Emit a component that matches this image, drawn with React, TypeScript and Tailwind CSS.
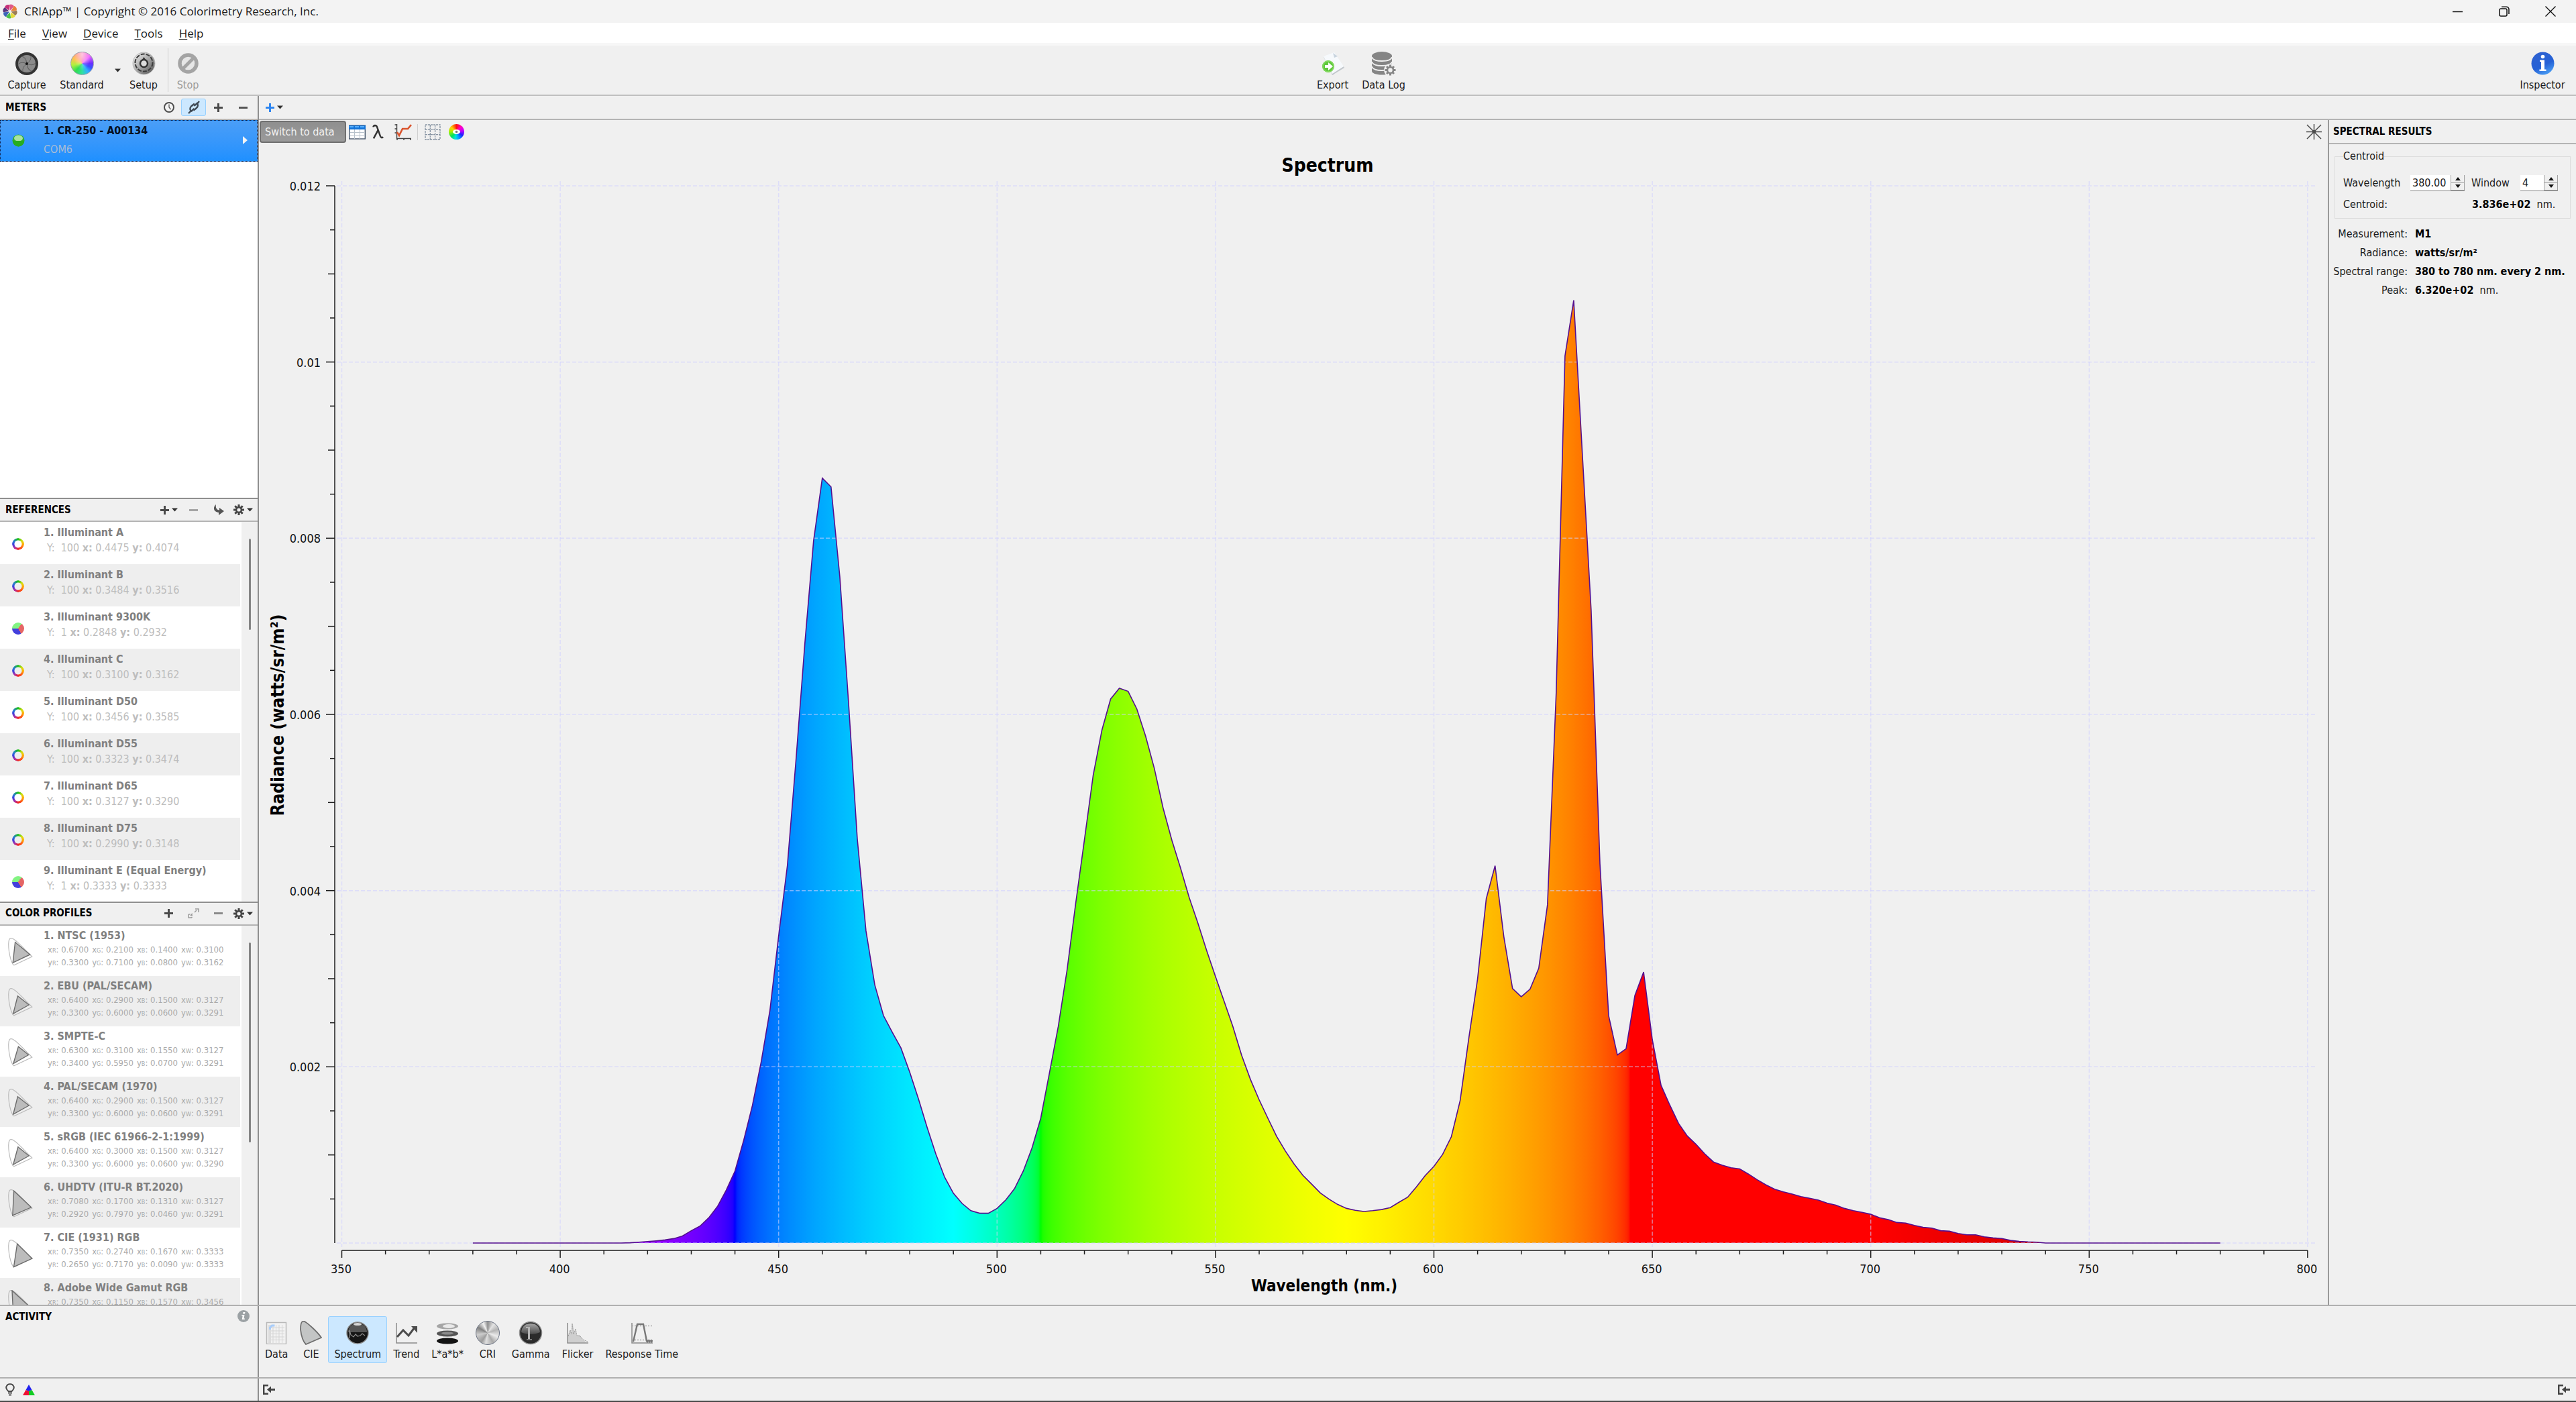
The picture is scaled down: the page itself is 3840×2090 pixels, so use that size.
import { useState } from 'react';
import type { ReactNode } from 'react';

// Spectral radiance, 2 nm steps starting at 380 nm, in 1e-6 watts/sr/m²
const FIRST_NM = 380;
const STEP_NM = 2;
const SAMPLES = [
  0, 0, 0, 0, 0, 0, 0, 0, 0, 0, 0, 0, 0, 0, 0, 0, 0, 0, 3, 10,
  17, 25, 35, 50, 80, 140, 192, 286, 414, 600,
  816, 1165, 1562, 2057, 2640, 3485, 4283, 5495, 6806, 7971,
  8682, 8583, 7563, 6136, 4592, 3543, 2931, 2581, 2395, 2214,
  1940, 1637, 1311, 1008, 746, 565, 449, 367, 338, 338,
  393, 489, 616, 817, 1079, 1416, 1932, 2456, 3090, 3854,
  4575, 5310, 5821, 6175, 6297, 6262, 6061, 5755, 5388, 4938,
  4575, 4256, 3920, 3627, 3317, 3024, 2740, 2456, 2128, 1857,
  1626, 1416, 1210, 1044, 896, 769, 669, 568, 498, 437,
  393, 371, 358, 367, 380, 402, 463, 520, 638, 765,
  870, 1006, 1207, 1617, 2329, 2997, 3910, 4283, 3479, 2889,
  2796, 2882, 3119, 3838, 6246, 10069, 10701, 8941, 7180, 4305,
  2580, 2135, 2206, 2810, 3076, 2307, 1790, 1567, 1358, 1215,
  1121, 1013, 920, 884, 855, 841, 783, 719, 661, 611,
  581, 556, 528, 508, 487, 452, 431, 393, 368, 348,
  327, 287, 266, 233, 226, 200, 178, 170, 140, 134,
  109, 94, 94, 71, 58, 51, 30, 18, 13, 10,
  0, 0, 0, 0, 0, 0, 0, 0, 0, 0,
  0, 0, 0, 0, 0, 0, 0, 0, 0, 0, 0,
];

const references = [
  { name: 'Illuminant A', Y: '100', x: '0.4475', y: '0.4074' },
  { name: 'Illuminant B', Y: '100', x: '0.3484', y: '0.3516' },
  { name: 'Illuminant 9300K', Y: '1', x: '0.2848', y: '0.2932', pie: true },
  { name: 'Illuminant C', Y: '100', x: '0.3100', y: '0.3162' },
  { name: 'Illuminant D50', Y: '100', x: '0.3456', y: '0.3585' },
  { name: 'Illuminant D55', Y: '100', x: '0.3323', y: '0.3474' },
  { name: 'Illuminant D65', Y: '100', x: '0.3127', y: '0.3290' },
  { name: 'Illuminant D75', Y: '100', x: '0.2990', y: '0.3148' },
  { name: 'Illuminant E (Equal Energy)', Y: '1', x: '0.3333', y: '0.3333', pie: true },
];

const profiles = [
  { name: 'NTSC (1953)', x: ['0.6700', '0.2100', '0.1400', '0.3100'], y: ['0.3300', '0.7100', '0.0800', '0.3162'] },
  { name: 'EBU (PAL/SECAM)', x: ['0.6400', '0.2900', '0.1500', '0.3127'], y: ['0.3300', '0.6000', '0.0600', '0.3291'] },
  { name: 'SMPTE-C', x: ['0.6300', '0.3100', '0.1550', '0.3127'], y: ['0.3400', '0.5950', '0.0700', '0.3291'] },
  { name: 'PAL/SECAM (1970)', x: ['0.6400', '0.2900', '0.1500', '0.3127'], y: ['0.3300', '0.6000', '0.0600', '0.3291'] },
  { name: 'sRGB (IEC 61966-2-1:1999)', x: ['0.6400', '0.3000', '0.1500', '0.3127'], y: ['0.3300', '0.6000', '0.0600', '0.3290'] },
  { name: 'UHDTV (ITU-R BT.2020)', x: ['0.7080', '0.1700', '0.1310', '0.3127'], y: ['0.2920', '0.7970', '0.0460', '0.3291'] },
  { name: 'CIE (1931) RGB', x: ['0.7350', '0.2740', '0.1670', '0.3333'], y: ['0.2650', '0.7170', '0.0090', '0.3333'] },
  { name: 'Adobe Wide Gamut RGB', x: ['0.7350', '0.1150', '0.1570', '0.3456'], y: ['0.2650', '0.8260', '0.0180', '0.3585'] },
];

const PRIMARIES = ['R', 'G', 'B', 'W'];

const LOCUS = [
  [0.1741, 0.005], [0.144, 0.0297], [0.1241, 0.0578], [0.0913, 0.1327], [0.0687, 0.2007], [0.0454, 0.295],
  [0.0235, 0.4127], [0.0082, 0.5384], [0.0039, 0.6548], [0.0139, 0.7502], [0.0389, 0.812], [0.0743, 0.8338],
  [0.1142, 0.8262], [0.1547, 0.8059], [0.2296, 0.7543], [0.3016, 0.6923], [0.3731, 0.6245], [0.4441, 0.5547],
  [0.5125, 0.4866], [0.5752, 0.4242], [0.627, 0.3725], [0.6915, 0.3083], [0.7347, 0.2653],
];

const toPoints = (xy: number[][]) => xy.map(([x, y]) => `${(0.5 + x * 48).toFixed(1)},${(41 - y * 48.6).toFixed(1)}`).join(' ');

// Approximate sRGB colour of a single wavelength
const wavelengthColor = (nm: number) => {
  let r = 0, g = 0, b = 0;
  if (nm < 440) { r = (440 - nm) / 60; b = 1; }
  else if (nm < 490) { g = (nm - 440) / 50; b = 1; }
  else if (nm < 510) { g = 1; b = (510 - nm) / 20; }
  else if (nm < 580) { r = (nm - 510) / 70; g = 1; }
  else if (nm < 645) { r = 1; g = (645 - nm) / 65; }
  else { r = 1; }
  const f = nm > 700 ? 0.3 + (0.7 * (780 - nm)) / 80 : nm < 420 ? 0.3 + (0.7 * (nm - 380)) / 40 : 1;
  const c = (v: number) => Math.round(255 * Math.pow(v * f, 0.44));
  return `rgb(${c(r)},${c(g)},${c(b)})`;
};

/* ---------- small icons ---------- */

const Caret = () => (
  <svg width="9" height="6" viewBox="0 0 9 6" aria-hidden="true"><path d="M0 0.5h9L4.5 5.5z" fill="#333" /></svg>
);

const Plus = ({ color = '#4a4a4a' }: { color?: string }) => (
  <svg width="13" height="13" viewBox="0 0 13 13" aria-hidden="true"><path d="M5 0h3v5h5v3H8v5H5V8H0V5h5z" fill={color} /></svg>
);

const Minus = ({ color = '#555' }: { color?: string }) => (
  <svg width="13" height="13" viewBox="0 0 13 13" aria-hidden="true"><path d="M0 5h13v3H0z" fill={color} /></svg>
);

const Gear = () => (
  <svg width="16" height="16" viewBox="0 0 16 16" aria-hidden="true">
    <g stroke="#444" strokeWidth="3">
      <path d="M8 0v16M0 8h16M2.3 2.3l11.4 11.4M13.7 2.3L2.3 13.7" />
    </g>
    <circle cx="8" cy="8" r="5" fill="#444" />
    <circle cx="8" cy="8" r="2.6" fill="#f0f0f0" />
  </svg>
);

const Clock = () => (
  <svg width="18" height="18" viewBox="0 0 18 18" aria-hidden="true">
    <circle cx="9" cy="9" r="7" fill="#f4f4f4" stroke="#4f4f4f" strokeWidth="2" />
    <path d="M9 4.5V9l2.6 3" fill="none" stroke="#4f4f4f" strokeWidth="1.2" />
  </svg>
);

const Link = () => (
  <svg width="20" height="20" viewBox="0 0 20 20" fill="none" stroke="#3f4a55" strokeWidth="2.4" aria-hidden="true">
    <path d="M2 19l4-4" />
    <path d="M14.5 5L18 1" />
    <path d="M11 4.5L6 8.5c-2.500 2.500-2 6 .5 7l4-3.500" />
    <path d="M9.500 14.500l4.500-3.500c2.500-2.500 2.500-5.500.5-7L10.500 8" />
  </svg>
);

const TurnArrow = () => (
  <svg width="16" height="18" viewBox="0 0 16 18" aria-hidden="true">
    <path d="M4 1C-1 5 0 12 8 13v4l8-6-7-5v3.500C5 9 3 6 4 1z" fill="#555" />
  </svg>
);

const Expand = () => (
  <svg width="17" height="15" viewBox="0 0 17 15" fill="none" stroke="#9a9a9a" strokeWidth="1.500" aria-hidden="true">
    <path d="M11 1h5v5M1 9v5h5M10 6l3-3M4 11l3-3" />
    <path d="M1 9h5v5" strokeDasharray="2 1" />
  </svg>
);

const InfoGrey = () => (
  <svg width="18" height="18" viewBox="0 0 18 18" aria-hidden="true">
    <circle cx="9" cy="9" r="9" fill="#9ba1a4" />
    <path d="M8.500 3h3l-.5 2.500H8zM6.500 7h4l-1 5.500h1.500l-.3 1.500h-4l1-5.500H6.200z" fill="#fff" />
  </svg>
);

const Dock = () => (
  <svg width="19" height="15" viewBox="0 0 19 15" aria-hidden="true">
    <path d="M8 1.200H1.200v12.600H8" fill="none" stroke="#444" strokeWidth="2.400" />
    <path d="M6 7.500l6-5v3.500h6v3h-6v3.500z" fill="#444" />
  </svg>
);

const GamutIcon = ({ x, y }: { x: string[]; y: string[] }) => (
  <svg width="37" height="42" viewBox="0 0 37 42" aria-hidden="true">
    <polygon points={toPoints(LOCUS)} fill="none" stroke="#bdbdbd" strokeWidth="1.200" />
    <polygon points={toPoints([0, 1, 2].map(i => [Number(x[i]), Number(y[i])]))} fill="#bcbcbc" stroke="#6c6c6c" strokeWidth="1.400" />
  </svg>
);

const AppLogo = () => {
  const petals = ['#e05a86', '#e8823a', '#9a7b55', '#e3d93c', '#4fc04c', '#3f63b8', '#57357f', '#c42f78'];
  return (
    <svg width="22" height="22" viewBox="-11 -11 22 22" aria-hidden="true">
      {petals.map((c, i) => (
        <path key={c} d="M0 -1.500L-3 -9.500C-1 -11.500 3 -11 4.500 -8.500Z" fill={c} transform={`rotate(${i * 45 + 10})`} />
      ))}
      <circle r="1.500" fill="#f3f3f3" />
    </svg>
  );
};

/* ---------- toolbar icons, all on a 34px grid ---------- */

const CaptureIcon = () => (
  <svg width="34" height="34" viewBox="-17 -17 34 34" aria-hidden="true">
    <circle r="15" fill="#8b8b8b" stroke="#333" strokeWidth="4" />
    {[0, 60, 120, 180, 240, 300].map(a => (
      <path key={a} d="M1 -1Q7 -5 6 -12" fill="none" stroke="#5f5f5f" strokeWidth="1" transform={`rotate(${a})`} />
    ))}
    <circle r="2" fill="#111" />
  </svg>
);

const StandardIcon = () => (
  <span className="size-[35px] rounded-full border border-gray-400 bg-[radial-gradient(ellipse_at_50%_10%,rgba(255,255,255,0.6),transparent_55%),conic-gradient(#ff70b0,#f060ff_45deg,#6a30ff_90deg,#3a50ff_115deg,#30b0ff_145deg,#30e0a0_180deg,#30dd50_220deg,#b0f040_260deg,#ffc050_300deg,#ff70b0)]" />
);

const SetupIcon = () => (
  <svg width="35" height="35" viewBox="0 0 35 35" aria-hidden="true">
    <defs>
      <linearGradient id="dial" x1="0" y1="0" x2="1" y2="1">
        <stop offset="0" stopColor="#f5f5f5" />
        <stop offset="0.5" stopColor="#a8a8a8" />
        <stop offset="1" stopColor="#4a4a4a" />
      </linearGradient>
    </defs>
    <circle cx="17.500" cy="17.500" r="16.500" fill="url(#dial)" stroke="#bbb" strokeWidth="1" />
    <circle cx="17.500" cy="16.500" r="13" fill="none" stroke="#3d3d3d" strokeWidth="2" strokeDasharray="6 2" />
    <path d="M17.500 8l3 4.500h-6z" fill="#333" />
    <circle cx="17.500" cy="17.500" r="5.500" fill="#ddd" stroke="#333" strokeWidth="2.500" />
  </svg>
);

const StopIcon = () => (
  <svg width="31" height="31" viewBox="0 0 31 31" aria-hidden="true">
    <circle cx="15.500" cy="15.500" r="12.500" fill="#e6e6e6" stroke="#a4a4a4" strokeWidth="5.500" />
    <path d="M24 7L7 24" stroke="#a4a4a4" strokeWidth="5" />
  </svg>
);

const ExportIcon = () => (
  <svg width="34" height="34" viewBox="0 0 34 34" aria-hidden="true">
    <path d="M3 7L5 5l14 28-3 1z" fill="#d3d8dd" />
    <path d="M16 34l18-11-1-2-18 10z" fill="#c2c7cc" />
    <path d="M3 6L19 0l14 21-17 11z" fill="#f6f9fc" />
    <path d="M17 1l7 5-5 2z" fill="#c9d4de" />
    <circle cx="10" cy="21" r="9" fill="#5fc83c" />
    <circle cx="10" cy="21" r="8" fill="none" stroke="#86da62" strokeWidth="1.500" />
    <path d="M5 19h5v-4l7 6-7 6v-4H5z" fill="#fff" />
  </svg>
);

const DataLogIcon = () => (
  <svg width="36" height="36" viewBox="0 0 36 36" aria-hidden="true">
    <g fill="#858585">
      <path d="M0 6v23c0 3 6 5.500 15 5.500s15-2.500 15-5.500V6z" />
      <ellipse cx="15" cy="6.500" rx="15" ry="6.500" />
    </g>
    <g fill="none" stroke="#f0f0f0" strokeWidth="1.800">
      <path d="M0 8c1 4 6 6 15 6s14-2 15-6M0 15c1 4 6 6 15 6s14-2 15-6M0 22c1 4 6 6 15 6s14-2 15-6" />
    </g>
    <circle cx="27.500" cy="27.500" r="9.500" fill="#f0f0f0" />
    <path d="M27.500 19.500v16M19.500 27.500h16M22 22l11 11M33 22L22 33" stroke="#858585" strokeWidth="3" />
    <circle cx="27.500" cy="27.500" r="4.500" fill="#f0f0f0" stroke="#858585" strokeWidth="2.600" />
  </svg>
);

const InspectorIcon = () => (
  <svg width="35" height="35" viewBox="0 0 35 35" aria-hidden="true">
    <defs>
      <linearGradient id="blue" x1="0.200" y1="0" x2="0.700" y2="1">
        <stop offset="0" stopColor="#2f62d0" />
        <stop offset="0.600" stopColor="#2561d6" />
        <stop offset="1" stopColor="#4ba0f5" />
      </linearGradient>
    </defs>
    <circle cx="17.500" cy="17.500" r="17" fill="url(#blue)" />
    <circle cx="17.500" cy="7.500" r="2.800" fill="#fff" />
    <path d="M13 12.500h7v14h2.500v2.500H12.500v-2.500H15v-11.500h-2z" fill="#fff" />
  </svg>
);

/* ---------- view icons ---------- */

const DataIcon = () => (
  <svg width="32" height="34" viewBox="0 0 32 34" aria-hidden="true">
    <rect x="1.500" y="1.500" width="29" height="32" fill="#f2f2f2" stroke="#b9b9b9" strokeWidth="1.500" />
    <rect x="4" y="5" width="4" height="27" fill="#dcdcdc" />
    <path d="M11 5v27M15.500 5v27M20 5v27M24.500 5v27M8 9.500h20M8 14h20M8 18.500h20M8 23h20M8 27.500h20" stroke="#d3d3d3" strokeWidth="1" />
    <path d="M6.500 12V9l3-3h4" fill="none" stroke="#a9cdfa" strokeWidth="3" />
  </svg>
);

const CieIcon = () => (
  <svg width="33" height="36" viewBox="0 0 33 36" aria-hidden="true">
    <path d="M4 1C1 2 1 8 1 13c1 9 4 18 8 22l23-10C25 15 11 3 7 1c-1-.5-2-.5-3 0z" fill="#c3c5c5" stroke="#6f6f6f" strokeWidth="1.800" />
  </svg>
);

const SpectrumIcon = () => (
  <svg width="34" height="34" viewBox="0 0 34 34" aria-hidden="true">
    <circle cx="17" cy="17" r="16" fill="#161616" stroke="#8e8e8e" strokeWidth="1.500" />
    <path d="M3 16C3 8 9 2.500 17 2.500S31 8 31 16z" fill="#555" />
    <ellipse cx="17" cy="4" rx="6" ry="2" fill="#d8d8d8" />
    <path d="M5 25V13l2 7 4 3 3-4 3 3 4-1 3-3 4 3" fill="none" stroke="#8d8d8d" strokeWidth="1.200" />
  </svg>
);

const TrendIcon = () => (
  <svg width="34" height="34" viewBox="0 0 34 34" aria-hidden="true">
    <path d="M2 2v30h31" fill="none" stroke="#8a8a8a" strokeWidth="1.500" />
    <path d="M3 23l9-10 8 8 9-12" fill="none" stroke="#4c4c4c" strokeWidth="3" />
    <path d="M24 7h9v10z" fill="#4c4c4c" />
  </svg>
);

const LabIcon = () => (
  <svg width="34" height="34" viewBox="0 0 34 34" aria-hidden="true">
    <ellipse cx="17" cy="7" rx="16" ry="4.500" fill="#a5a5a5" />
    <ellipse cx="19" cy="7" rx="9" ry="3" fill="#e9e9e9" />
    <ellipse cx="17" cy="18" rx="16" ry="4.500" fill="#555" />
    <ellipse cx="17" cy="17.500" rx="9" ry="2" fill="#8b8b8b" />
    <ellipse cx="17" cy="29" rx="16" ry="4.500" fill="#131313" />
  </svg>
);

const CriIcon = () => (
  <span className="size-[36px] rounded-full border border-gray-500 bg-[conic-gradient(#8e8e8e,#e4e4e4_35deg,#b4b4b4_70deg,#ececec_110deg,#a9a9a9_150deg,#e0e0e0_190deg,#9c9c9c_215deg,#cdcdcd_260deg,#808080_300deg,#f2f2f2_335deg,#8e8e8e)]" />
);

const GammaIcon = () => (
  <svg width="36" height="36" viewBox="0 0 36 36" aria-hidden="true">
    <defs>
      <linearGradient id="gloss" x1="0" y1="0" x2="0" y2="1">
        <stop offset="0" stopColor="#a5a5a5" />
        <stop offset="1" stopColor="#4a4a4a" />
      </linearGradient>
    </defs>
    <circle cx="18" cy="18" r="16.500" fill="#2b2b2b" stroke="#8f8f8f" strokeWidth="1.500" />
    <path d="M4 17C5 8 10 4 18 4s13 4 14 13c-8 4-20 4-28 0z" fill="url(#gloss)" />
    <path d="M11 9h6v19h-3V11h-3z" fill="#b5b5b5" />
    <path d="M12 28h8" stroke="#777" strokeWidth="2" />
  </svg>
);

const FlickerIcon = () => (
  <svg width="34" height="34" viewBox="0 0 34 34" aria-hidden="true">
    <path d="M3 31V20l3-8 2 6 2-15 1 14 3-6 2 10 4-1 4 6 6 5z" fill="#cfcfcf" />
    <path d="M3 22l3-9 2 6 1-16 2 16 3-8 2 10 5 1 4 5 7 3" fill="none" stroke="#9a9a9a" strokeWidth="1" strokeDasharray="2 1" />
    <path d="M2 2v30h31" fill="none" stroke="#8a8a8a" strokeWidth="1.500" />
  </svg>
);

const ResponseIcon = () => (
  <svg width="34" height="34" viewBox="0 0 34 34" aria-hidden="true">
    <path d="M2 2v30h31" fill="none" stroke="#8a8a8a" strokeWidth="1.500" />
    <path d="M2 6.500h31M2 27.500h31" stroke="#aaa" strokeWidth="1.500" strokeDasharray="2 2" />
    <path d="M4 30l6-26h9l5 25h9" fill="none" stroke="#777" strokeWidth="2.400" />
    <path d="M24 29.500h9" stroke="#777" strokeWidth="4" strokeDasharray="2 1" />
  </svg>
);

/* ---------- layout pieces ---------- */

const ToolButton = ({ label, icon, className = '', disabled }: { label: string; icon: ReactNode; className?: string; disabled?: boolean }) => (
  <button type="button" disabled={disabled} className={`flex flex-col items-center pt-2 ${disabled ? 'text-[#9a9a9a]' : ''} ${className}`}>
    <span className="flex h-[37px] items-center">{icon}</span>
    <span className="mt-1 leading-5 whitespace-nowrap">{label}</span>
  </button>
);

const HeaderButton = ({ label, children, active }: { label: string; children: ReactNode; active?: boolean }) => (
  <button
    type="button"
    aria-label={label}
    className={`flex h-[26px] w-[37px] items-center justify-center gap-1 ${active ? 'rounded-[3px] border border-[#99d1ff] bg-[#cce8ff]' : ''}`}
  >
    {children}
  </button>
);

const Panel = ({ title, actions, children, first }: { title: string; actions: ReactNode; children: ReactNode; first?: boolean }) => (
  <section className={`flex min-h-0 flex-1 flex-col ${first ? '' : 'border-t-2 border-[#8f8f8f]'}`}>
    <header className={`flex shrink-0 items-center justify-between border-b-2 border-[#b4b4b4] pr-[3px] pl-2 ${first ? 'h-9' : 'h-[34px]'}`}>
      <h2 className="text-[15px] font-bold text-black">{title}</h2>
      <div className="flex items-center">{actions}</div>
    </header>
    {children}
  </section>
);

const ScrollList = ({ thumb, children }: { thumb: string; children: ReactNode }) => (
  <div className="flex min-h-0 flex-1 bg-white">
    <ul className="min-w-0 flex-1 overflow-hidden">{children}</ul>
    <div className="w-6 bg-[#f0f0f0] pt-[25px]">
      <div className={`mx-auto w-[3px] rounded bg-[#858585] ${thumb}`} />
    </div>
  </div>
);

const Spinner = ({ id, value, width, onStep }: { id: string; value: string; width: string; onStep: (d: number) => void }) => (
  <span className="flex h-6 border-b border-[#868686]">
    <input id={id} value={value} readOnly className={`h-full bg-white pl-[3px] outline-none ${width}`} />
    <span className="flex w-[21px] flex-col border-r border-[#a0a0a0]">
      <button type="button" aria-label={`Increase ${id}`} onClick={() => onStep(1)} className="flex flex-1 items-center justify-center border-b border-l border-[#a0a0a0]">
        <svg width="8" height="5" viewBox="0 0 8 5" aria-hidden="true"><path d="M0 5h8L4 0z" fill="#111" /></svg>
      </button>
      <button type="button" aria-label={`Decrease ${id}`} onClick={() => onStep(-1)} className="flex flex-1 items-center justify-center border-b border-l border-[#a0a0a0]">
        <svg width="8" height="5" viewBox="0 0 8 5" aria-hidden="true"><path d="M0 0h8L4 5z" fill="#111" /></svg>
      </button>
    </span>
  </span>
);

// Plot geometry inside the 3084 x 1731 view box
const X0 = 123.5;
const PX_PER_NM = 6.512;
const Y0 = 1639;
const PX_PER_UNIT = 1576 / 12000;
const px = (nm: number) => X0 + (nm - 350) * PX_PER_NM;
const py = (v: number) => Y0 - v * PX_PER_UNIT;

const SpectrumPlot = () => {
  const pts = SAMPLES.map((v, i) => `${px(FIRST_NM + i * STEP_NM).toFixed(1)},${py(v).toFixed(1)}`);
  const majorsX = Array.from({ length: 10 }, (_, i) => 350 + i * 50);
  const minorsX = Array.from({ length: 46 }, (_, i) => 350 + i * 10);
  const majorsY = Array.from({ length: 7 }, (_, i) => i * 2000);
  const minorsY = Array.from({ length: 25 }, (_, i) => i * 500);
  // half-nanometre stops keep the hue edges at 440, 510 and 645 nm crisp
  const stops = Array.from({ length: 801 }, (_, i) => i / 800);

  return (
    <svg viewBox="0 0 3084 1731" preserveAspectRatio="none" className="block h-full w-full" role="img" aria-label="Spectrum">
      <defs>
        <linearGradient id="spectrum" gradientUnits="userSpaceOnUse" x1={px(380)} y1="0" x2={px(780)} y2="0">
          {stops.map(t => (
            <stop key={t} offset={t} stopColor={wavelengthColor(380 + t * 400)} />
          ))}
        </linearGradient>
      </defs>

      <polygon points={`${px(380)},${Y0} ${pts.join(' ')} ${px(780)},${Y0}`} fill="url(#spectrum)" />

      <g stroke="#d0d0ff" strokeOpacity="0.6" strokeWidth="1.500" strokeDasharray="6 3">
        {majorsX.map(nm => <line key={nm} x1={px(nm)} x2={px(nm)} y1="56" y2="1645" />)}
        {majorsY.map(v => <line key={v} x1="116" x2="3066" y1={py(v)} y2={py(v)} />)}
      </g>

      <polyline points={pts.join(' ')} fill="none" stroke="#55108f" strokeWidth="1.600" />

      <g stroke="#1c1c1c" strokeWidth="1.500">
        <line x1="113" x2="113" y1={py(12000)} y2={Y0} />
        {minorsY.filter(v => v > 0).map(v => (
          <line key={v} x1={v % 2000 === 0 ? 100 : v % 1000 === 0 ? 103 : 106} x2="113" y1={py(v)} y2={py(v)} />
        ))}
        <line x1={px(350)} x2={px(800)} y1="1650" y2="1650" />
        {minorsX.map(nm => (
          <line key={nm} x1={px(nm)} x2={px(nm)} y1="1650" y2={nm % 50 === 0 ? 1661 : 1656} />
        ))}
      </g>

      <g fontSize="18" fill="#111">
        {majorsY.filter(v => v > 0).map(v => (
          <text key={v} x="92" y={py(v) + 7} textAnchor="end">{v / 1000000}</text>
        ))}
        {majorsX.map(nm => <text key={nm} x={px(nm) - 1} y="1684" textAnchor="middle">{nm}</text>)}
      </g>

      <g fontWeight="700" fill="#000" textAnchor="middle">
        <text x="1593" y="42" fontSize="28">Spectrum</text>
        <text x="1588" y="1711" fontSize="24">Wavelength (nm.)</text>
        <text transform="translate(37 852) rotate(-90)" fontSize="26">Radiance (watts/sr/m²)</text>
      </g>
    </svg>
  );
};

const views = [
  { label: 'Data', icon: <DataIcon /> },
  { label: 'CIE', icon: <CieIcon /> },
  { label: 'Spectrum', icon: <SpectrumIcon /> },
  { label: 'Trend', icon: <TrendIcon /> },
  { label: 'L*a*b*', icon: <LabIcon /> },
  { label: 'CRI', icon: <CriIcon /> },
  { label: 'Gamma', icon: <GammaIcon /> },
  { label: 'Flicker', icon: <FlickerIcon /> },
  { label: 'Response Time', icon: <ResponseIcon /> },
];

const results = [
  ['Measurement:', 'M1', ''],
  ['Radiance:', 'watts/sr/m²', ''],
  ['Spectral range:', '380 to 780 nm. every 2 nm.', ''],
  ['Peak:', '6.320e+02', 'nm.'],
];

export default function App() {
  const [view, setView] = useState('Spectrum');
  const [wavelength, setWavelength] = useState(380);
  const [span, setSpan] = useState(4);

  return (
    <div className="flex h-screen flex-col overflow-hidden border-b-2 border-[#4a4a4a] bg-[#f0f0f0] font-['DejaVu_Sans_Condensed','DejaVu_Sans',sans-serif] text-[16px] text-[#1a1a1a]">
      {/* Title bar */}
      <div className="flex h-[34px] shrink-0 items-center bg-[#f3f3f3] pr-1 pl-1 font-['Open_Sans',sans-serif]">
        <AppLogo />
        <h1 className="ml-2.5 flex-1 text-[17px]">CRIApp™ | Copyright © 2016 Colorimetry Research, Inc.</h1>
        <button type="button" aria-label="Minimize" className="flex h-full w-[69px] items-center justify-center">
          <svg width="15" height="15" viewBox="0 0 15 15" aria-hidden="true"><path d="M0 7.500h15" stroke="#111" strokeWidth="1.500" /></svg>
        </button>
        <button type="button" aria-label="Restore" className="flex h-full w-[69px] items-center justify-center">
          <svg width="16" height="16" viewBox="0 0 16 16" fill="none" stroke="#111" strokeWidth="1.500" aria-hidden="true">
            <rect x="1" y="4" width="11" height="11" rx="2" />
            <path d="M4 1.200h7.500a3.500 3.500 0 0 1 3.500 3.500V12" />
          </svg>
        </button>
        <button type="button" aria-label="Close" className="flex h-full w-[69px] items-center justify-center">
          <svg width="16" height="16" viewBox="0 0 16 16" aria-hidden="true"><path d="M0.500 0.500l15 15M15.500 0.500l-15 15" stroke="#111" strokeWidth="1.400" /></svg>
        </button>
      </div>

      {/* Menu bar */}
      <nav className="flex h-[34px] shrink-0 items-center gap-6 border-b-4 border-[#f7f7f7] bg-white pt-0.5 pl-3 font-['Open_Sans',sans-serif] text-[17px] leading-5">
        {['File', 'View', 'Device', 'Tools', 'Help'].map(m => (
          <button key={m} type="button"><u className="underline-offset-2">{m[0]}</u>{m.slice(1)}</button>
        ))}
      </nav>

      {/* Toolbar */}
      <div className="flex h-[75px] shrink-0 justify-between border-b-2 border-[#c0c0c0]">
        <div className="flex pl-1">
          <ToolButton label="Capture" icon={<CaptureIcon />} className="w-[72px]" />
          <ToolButton label="Standard" icon={<StandardIcon />} className="w-[92px]" />
          <button type="button" aria-label="Standard options" className="flex w-3.5 items-center justify-center"><Caret /></button>
          <ToolButton label="Setup" icon={<SetupIcon />} className="w-16" />
          <span className="my-1 ml-1 w-px bg-[#cdcdcd]" />
          <ToolButton label="Stop" icon={<StopIcon />} className="w-[58px]" disabled />
        </div>
        <div className="flex">
          <ToolButton label="Export" icon={<ExportIcon />} className="w-[76px]" />
          <ToolButton label="Data Log" icon={<DataLogIcon />} className="w-[76px]" />
        </div>
        <ToolButton label="Inspector" icon={<InspectorIcon />} className="w-[100px]" />
      </div>

      <div className="flex min-h-0 flex-1">
        {/* Sidebar */}
        <aside className="flex w-[386px] shrink-0 flex-col border-r-2 border-[#8f8f8f]">
          <Panel
            first
            title="METERS"
            actions={
              <>
                <HeaderButton label="History"><Clock /></HeaderButton>
                <HeaderButton label="Connect" active><Link /></HeaderButton>
                <HeaderButton label="Add meter"><Plus /></HeaderButton>
                <HeaderButton label="Remove meter"><Minus /></HeaderButton>
              </>
            }
          >
            <ul className="flex-1 bg-white">
              <li className="flex h-[62px] items-center border border-dotted border-[#10204a] bg-linear-to-b from-[#4a9ef7] to-[#1e90ff] pr-3.5 pb-0.5 pl-[17px] outline-1 -outline-offset-1 outline-dotted outline-[#10204a]">
                <svg width="19" height="19" viewBox="0 0 19 19" aria-hidden="true">
                  <circle cx="9.500" cy="9.500" r="9" fill="#2fae2c" />
                  <ellipse cx="9.500" cy="6" rx="6.500" ry="4.500" fill="#a9e3a0" />
                  <path d="M1 10h17a8.500 8.500 0 0 1-17 0z" fill="#27ad1f" />
                </svg>
                <div className="ml-7 flex-1 leading-7">
                  <p className="font-bold text-[#06101f]">1. CR-250 - A00134</p>
                  <p className="text-[#a9bcd6]">COM6</p>
                </div>
                <svg width="7" height="12" viewBox="0 0 7 12" aria-hidden="true"><path d="M0 0l7 6-7 6z" fill="#f4f4f4" /></svg>
              </li>
            </ul>
          </Panel>

          <Panel
            title="REFERENCES"
            actions={
              <>
                <HeaderButton label="Add reference"><Plus /><Caret /></HeaderButton>
                <HeaderButton label="Remove reference"><Minus color="#a5a5a5" /></HeaderButton>
                <HeaderButton label="Apply reference"><TurnArrow /></HeaderButton>
                <HeaderButton label="Reference settings"><Gear /><Caret /></HeaderButton>
              </>
            }
          >
            <ScrollList thumb="h-[136px]">
              {references.map((r, i) => (
                <li key={r.name} className="flex h-[63px] w-[358px] pl-[18px] even:bg-[#eeeeee]">
                  {r.pie ? (
                    <span className="mt-6 size-[18px] rounded-full bg-[conic-gradient(from_35deg,#e56565_0_115deg,#4340dc_115deg_235deg,#82f482_235deg_360deg)]" />
                  ) : (
                    <span className="mt-6 size-[18px] rounded-full bg-[conic-gradient(#18c018,#d8e010_50deg,#ffb000_90deg,#ff5a18_140deg,#f02828_180deg,#b030a0_220deg,#4040e0_265deg,#2878d8_300deg,#18c018)] [mask:radial-gradient(circle,transparent_5px,#000_6px)]" />
                  )}
                  <div className="ml-[29px] pt-1">
                    <p className="leading-6 font-bold text-[#808080]">{i + 1}. {r.name}</p>
                    <p className="pl-[5px] leading-[22px] text-[#bdbdbd]">Y:&nbsp; {r.Y} <b>x:</b> {r.x} <b>y:</b> {r.y}</p>
                  </div>
                </li>
              ))}
            </ScrollList>
          </Panel>

          <Panel
            title="COLOR PROFILES"
            actions={
              <>
                <HeaderButton label="Add profile"><Plus /></HeaderButton>
                <HeaderButton label="Expand profile"><Expand /></HeaderButton>
                <HeaderButton label="Remove profile"><Minus color="#8a8a8a" /></HeaderButton>
                <HeaderButton label="Profile settings"><Gear /><Caret /></HeaderButton>
              </>
            }
          >
            <ScrollList thumb="h-[298px]">
              {profiles.map((p, i) => (
                <li key={p.name} className="flex h-[75px] w-[358px] pl-3 even:bg-[#eeeeee]">
                  <div className="pt-[18px]"><GamutIcon x={p.x} y={p.y} /></div>
                  <div className="ml-4 pt-[3px]">
                    <p className="leading-6 font-bold text-[#808080]">{i + 1}. {p.name}</p>
                    {(['x', 'y'] as const).map(axis => (
                      <p key={axis} className="flex gap-[5px] pl-1.5 text-[13px] leading-[17px] whitespace-nowrap text-[#aaaaaa]">
                        {p[axis].map((v, k) => (
                          <span key={k}>{axis}<span className="text-[9px]">{PRIMARIES[k]}</span>: {v}</span>
                        ))}
                      </p>
                    ))}
                  </div>
                </li>
              ))}
            </ScrollList>
          </Panel>
        </aside>

        {/* Document area */}
        <main className="flex min-w-0 flex-1 flex-col">
          <div className="flex h-9 shrink-0 items-center border-b-2 border-[#b4b4b4] pl-2.5">
            <button type="button" aria-label="New document" className="flex items-center gap-1"><Plus color="#2f86f0" /><Caret /></button>
          </div>

          <div className="flex min-h-0 flex-1">
            <section className="flex min-w-0 flex-1 flex-col">
              <div className="flex h-[35px] shrink-0 items-center pl-px">
                <button type="button" className="flex h-[33px] w-[129px] items-center rounded-[4px] border-2 border-[#6f6f6f] bg-linear-to-b from-[#8f8f8f] to-[#9b9b9b] pl-1.5 text-[#f2f2f2]">Switch to data</button>
                <button type="button" aria-label="Table" className="ml-1">
                  <svg width="25" height="22" viewBox="0 0 25 22" aria-hidden="true">
                    <rect x="0.700" y="1" width="23.600" height="20" fill="#fff" stroke="#46566b" strokeWidth="1.400" />
                    <path d="M0 1h25v6H0z" fill="#1273d8" />
                    <path d="M1 3h23" stroke="#58b0ff" strokeWidth="2" strokeDasharray="6 2" />
                    <path d="M8.500 7v14M16.500 7v14M1 11.500h23M1 16.500h23" stroke="#b8c2cc" strokeWidth="1" />
                  </svg>
                </button>
                <button type="button" aria-label="Wavelength" className="ml-2.5">
                  <svg width="17" height="23" viewBox="0 0 18 23" fill="none" stroke="#333" aria-hidden="true">
                    <path d="M1.500 4C2 1 6 0 7.500 4l5 14c1 3 3 3.500 4.500 1.500" strokeWidth="2.600" />
                    <path d="M9 9L2 22" strokeWidth="2.600" />
                  </svg>
                </button>
                <button type="button" aria-label="Plot" className="ml-4">
                  <svg width="26" height="25" viewBox="0 0 26 25" fill="none" aria-hidden="true">
                    <path d="M3.500 1v21.500H25M0.500 2h3M0.500 8h3M0.500 14h3M4 22v3M14 22v3M24 22v3" stroke="#444" strokeWidth="1.500" />
                    <path d="M4 13l3 5 5-10h8l5-6" stroke="#d9532c" strokeWidth="2.600" />
                  </svg>
                </button>
                <span className="ml-2 h-6 w-px bg-[#cfcfcf]" />
                <button type="button" aria-label="Grid" className="ml-2.5">
                  <svg width="24" height="24" viewBox="0 0 24 24" fill="none" stroke="#8794a3" strokeWidth="1.300" strokeDasharray="3 1" aria-hidden="true">
                    <path d="M1 1h22v22H1zM8.300 1v22M15.600 1v22M1 8.300h22M1 15.600h22" />
                  </svg>
                </button>
                <button type="button" aria-label="Color" className="ml-3 flex size-[23px] items-center justify-center rounded-full bg-[conic-gradient(#ff1010,#ff00c8_45deg,#c000ff_80deg,#2020ff_120deg,#00a0ff_160deg,#00e0e0_190deg,#00e060_225deg,#a0f000_270deg,#ffd000_310deg,#ff1010)]">
                  <svg width="11" height="7" viewBox="0 0 11 7" aria-hidden="true">
                    <ellipse cx="5.500" cy="3.500" rx="5.500" ry="3.500" fill="#fff" />
                    <circle cx="5.500" cy="3.500" r="1.800" fill="#777" />
                  </svg>
                </button>
                <button type="button" aria-label="Fit view" className="mr-[9px] ml-auto">
                  <svg width="23" height="23" viewBox="0 0 23 23" stroke="#4c4c4c" strokeWidth="1.500" aria-hidden="true">
                    <path d="M11.500 0v23M0 11.500h23M1 1l21 21M22 1L1 22" />
                    <circle cx="11.500" cy="11.500" r="2" fill="#4c4c4c" />
                  </svg>
                </button>
              </div>
              <div className="min-h-0 flex-1"><SpectrumPlot /></div>
            </section>

            {/* Inspector */}
            <aside className="w-[370px] shrink-0 border-l-2 border-[#9a9a9a]">
              <h2 className="flex h-9 items-center border-b-2 border-[#b4b4b4] pl-1.5 text-[15px] font-bold text-black">SPECTRAL RESULTS</h2>
              <fieldset className="mx-2 mt-2 h-[103px] border border-[#dcdcdc] px-3">
                <legend className="leading-5">Centroid</legend>
                <div className="mt-[18px] flex items-center">
                  <label htmlFor="wavelength" className="w-[100px]">Wavelength</label>
                  <Spinner id="wavelength" value={wavelength.toFixed(2)} width="w-[60px]" onStep={d => setWavelength(w => w + d)} />
                  <label htmlFor="window" className="ml-2.5 w-[73px]">Window</label>
                  <Spinner id="window" value={String(span)} width="w-[35px]" onStep={d => setSpan(s => s + d)} />
                </div>
                <p className="mt-2 flex leading-6">
                  <span className="w-[192px]">Centroid:</span>
                  <span><b className="text-black">3.836e+02</b>&nbsp; nm.</span>
                </p>
              </fieldset>
              <dl className="mt-[9px] grid grid-cols-[117px_1fr] gap-x-[11px] leading-7 whitespace-nowrap">
                {results.map(([term, value, unit]) => (
                  <div key={term} className="contents">
                    <dt className="text-right">{term}</dt>
                    <dd><b className="text-black">{value}</b>{unit && <>&nbsp; {unit}</>}</dd>
                  </div>
                ))}
              </dl>
            </aside>
          </div>
        </main>
      </div>

      {/* Activity and view switcher */}
      <div className="flex h-[108px] shrink-0 border-t-2 border-[#b0b0b0]">
        <section className="flex w-[386px] shrink-0 items-start justify-between border-r-2 border-[#8f8f8f] pt-1.5 pr-3 pl-2">
          <h2 className="text-[15px] leading-5 font-bold text-black">ACTIVITY</h2>
          <button type="button" aria-label="Activity info"><InfoGrey /></button>
        </section>
        <div className="flex flex-1 items-start pt-[15px]">
          {views.map(v => (
            <button
              key={v.label}
              type="button"
              aria-pressed={v.label === view}
              onClick={() => setView(v.label)}
              className={`flex h-[70px] min-w-12 flex-col items-center rounded-[3px] border px-2 pt-1.5 ${v.label === view ? 'border-[#99d1ff] bg-[#cce8ff]' : 'border-transparent'}`}
            >
              <span className="mb-1 flex h-9 items-center">{v.icon}</span>
              <span className="leading-5 whitespace-nowrap">{v.label}</span>
            </button>
          ))}
        </div>
      </div>

      {/* Status bar */}
      <footer className="flex h-[35px] shrink-0 border-t-2 border-[#b0b0b0]">
        <div className="flex w-[386px] shrink-0 items-center border-r-2 border-[#8f8f8f] pl-2">
          <svg width="14" height="19" viewBox="0 0 14 19" fill="none" stroke="#4a4a4a" aria-hidden="true">
            <path d="M4.500 12C1 9 1 6 1.500 5c2-5 9-5 11 0 .5 1 .5 4-3 7z" strokeWidth="2" />
            <path d="M4 14.500h6M5 17.500h4" strokeWidth="2" />
          </svg>
          <svg width="18" height="16" viewBox="0 0 18 16" className="ml-3" aria-hidden="true">
            <path d="M9 0l4.500 8L9 10 4.500 8z" fill="#2222ee" />
            <path d="M4.500 8L9 10v6H0z" fill="#ee1133" />
            <path d="M13.500 8L9 10v6h9z" fill="#11cc22" />
          </svg>
        </div>
        <div className="flex flex-1 items-center justify-between pr-2 pl-1.5">
          <button type="button" aria-label="Toggle left panel"><Dock /></button>
          <button type="button" aria-label="Toggle right panel"><Dock /></button>
        </div>
      </footer>
    </div>
  );
}
